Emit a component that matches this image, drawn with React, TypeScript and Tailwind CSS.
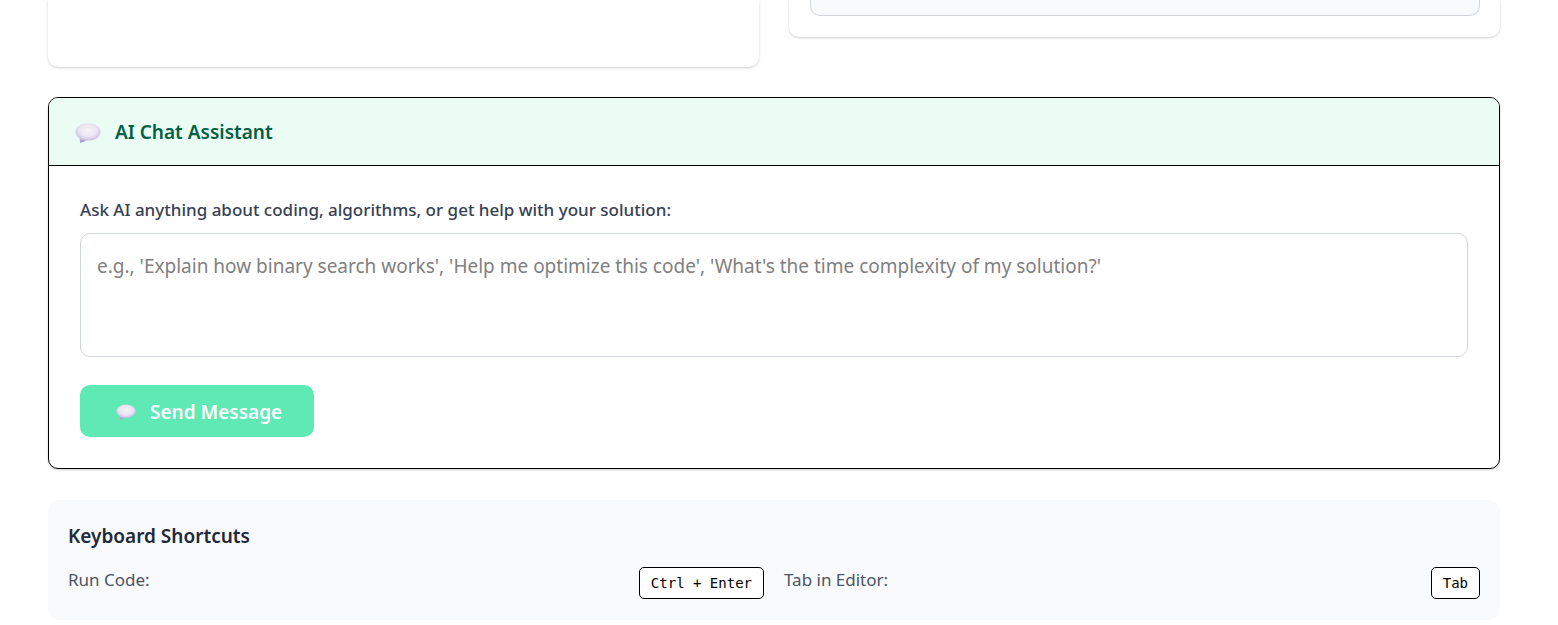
import { useState } from "react";

function SpeechBubble({ className, id }: { className: string; id: string }) {
  return (
    <svg viewBox="0 0 26 20" className={className} aria-hidden="true">
      <defs>
        <radialGradient id={`${id}-fill`} cx="0.5" cy="0.42" r="0.6">
          <stop offset="0" stopColor="#f6f3f8" />
          <stop offset="0.6" stopColor="#eae4f1" />
          <stop offset="1" stopColor="#c6b9dd" />
        </radialGradient>
        <linearGradient id={`${id}-tail`} x1="0" y1="0" x2="0" y2="1">
          <stop offset="0.4" stopColor="#c6b9dd" />
          <stop offset="1" stopColor="#a08fc9" />
        </linearGradient>
      </defs>
      <path d="M4.500 13 5 19.800C7.800 19.500 10.500 18.600 12 16.600Z" fill={`url(#${id}-tail)`} />
      <path
        d="M13 .3C20 .3 25.500 4.200 25.500 9S20 17.600 13 17.600C6 17.600 .5 13.800 .5 9S6 .3 13 .3Z"
        fill={`url(#${id}-fill)`}
      />
    </svg>
  );
}

function Shortcut({ label, keys }: { label: string; keys: string }) {
  return (
    <div className="flex items-start justify-between">
      <span className="text-[17px] leading-[26px] text-[#4a5565]">{label}</span>
      <kbd className="rounded-[5px] border border-black bg-white px-[11px] py-[5px] font-['DejaVu_Sans_Mono',monospace] text-sm leading-5 text-black">
        {keys}
      </kbd>
    </div>
  );
}

export default function App() {
  const [message, setMessage] = useState("");

  return (
    <main className="bg-white pr-[58px] pb-[5px] pl-12 font-['Noto_Sans','Open_Sans',sans-serif]">
      <div className="grid grid-cols-2 items-start gap-[30px]">
        <section className="h-[67px] rounded-b-[10px] bg-white shadow-[0_1px_3px_rgba(0,0,0,0.1),0_1px_2px_rgba(0,0,0,0.1)]" />
        <section className="rounded-b-[10px] bg-white pr-5 pb-[21px] pl-[21px] shadow-[0_1px_3px_rgba(0,0,0,0.1),0_1px_2px_rgba(0,0,0,0.1)]">
          <div className="h-4 rounded-b-[10px] border border-t-0 border-[#d1d5dc] bg-[#f9fafb]" />
        </section>
      </div>

      <section className="mt-[30px] overflow-hidden rounded-[10px] border border-black bg-white shadow-[0_1px_3px_rgba(0,0,0,0.1),0_1px_2px_rgba(0,0,0,0.1)]">
        <header className="flex items-center border-b border-black bg-[#ebfcf5] px-[26px] pt-[21px] pb-[19px]">
          <SpeechBubble id="header-bubble" className="mr-3.5 h-5 w-[26px]" />
          <h2 className="text-[19px] leading-[27px] font-semibold text-[#006045]">AI Chat Assistant</h2>
        </header>
        <form className="px-[31px] pt-[31px] pb-[31px]" onSubmit={(event) => event.preventDefault()}>
          <label htmlFor="chat-message" className="block text-[17px] leading-[26px] font-medium text-[#364153]">
            Ask AI anything about coding, algorithms, or get help with your solution:
          </label>
          <textarea
            id="chat-message"
            value={message}
            onChange={(event) => setMessage(event.target.value)}
            placeholder="e.g., 'Explain how binary search works', 'Help me optimize this code', 'What's the time complexity of my solution?'"
            className="mt-2.5 block h-[124px] w-full resize-none rounded-[10px] border border-[#d1d5dc] p-4 text-[19px] leading-8 text-[#101828] placeholder:text-[#808080]"
          />
          <button
            type="submit"
            className="mt-7 flex h-[52px] items-center rounded-[10px] bg-[#5ee9b5] pt-0.5 pr-8 pl-9 text-[19px] font-semibold text-white"
          >
            <SpeechBubble id="button-bubble" className="mr-3.5 h-4 w-5" />
            Send Message
          </button>
        </form>
      </section>

      <section className="mt-[31px] rounded-[10px] bg-[#f9fafb] px-5 pt-[21px] pb-[21px]">
        <h3 className="text-[19px] leading-[31px] font-semibold text-[#1e2939]">Keyboard Shortcuts</h3>
        <div className="mt-[15px] grid grid-cols-2 gap-5">
          <Shortcut label="Run Code:" keys="Ctrl + Enter" />
          <Shortcut label="Tab in Editor:" keys="Tab" />
        </div>
      </section>
    </main>
  );
}
